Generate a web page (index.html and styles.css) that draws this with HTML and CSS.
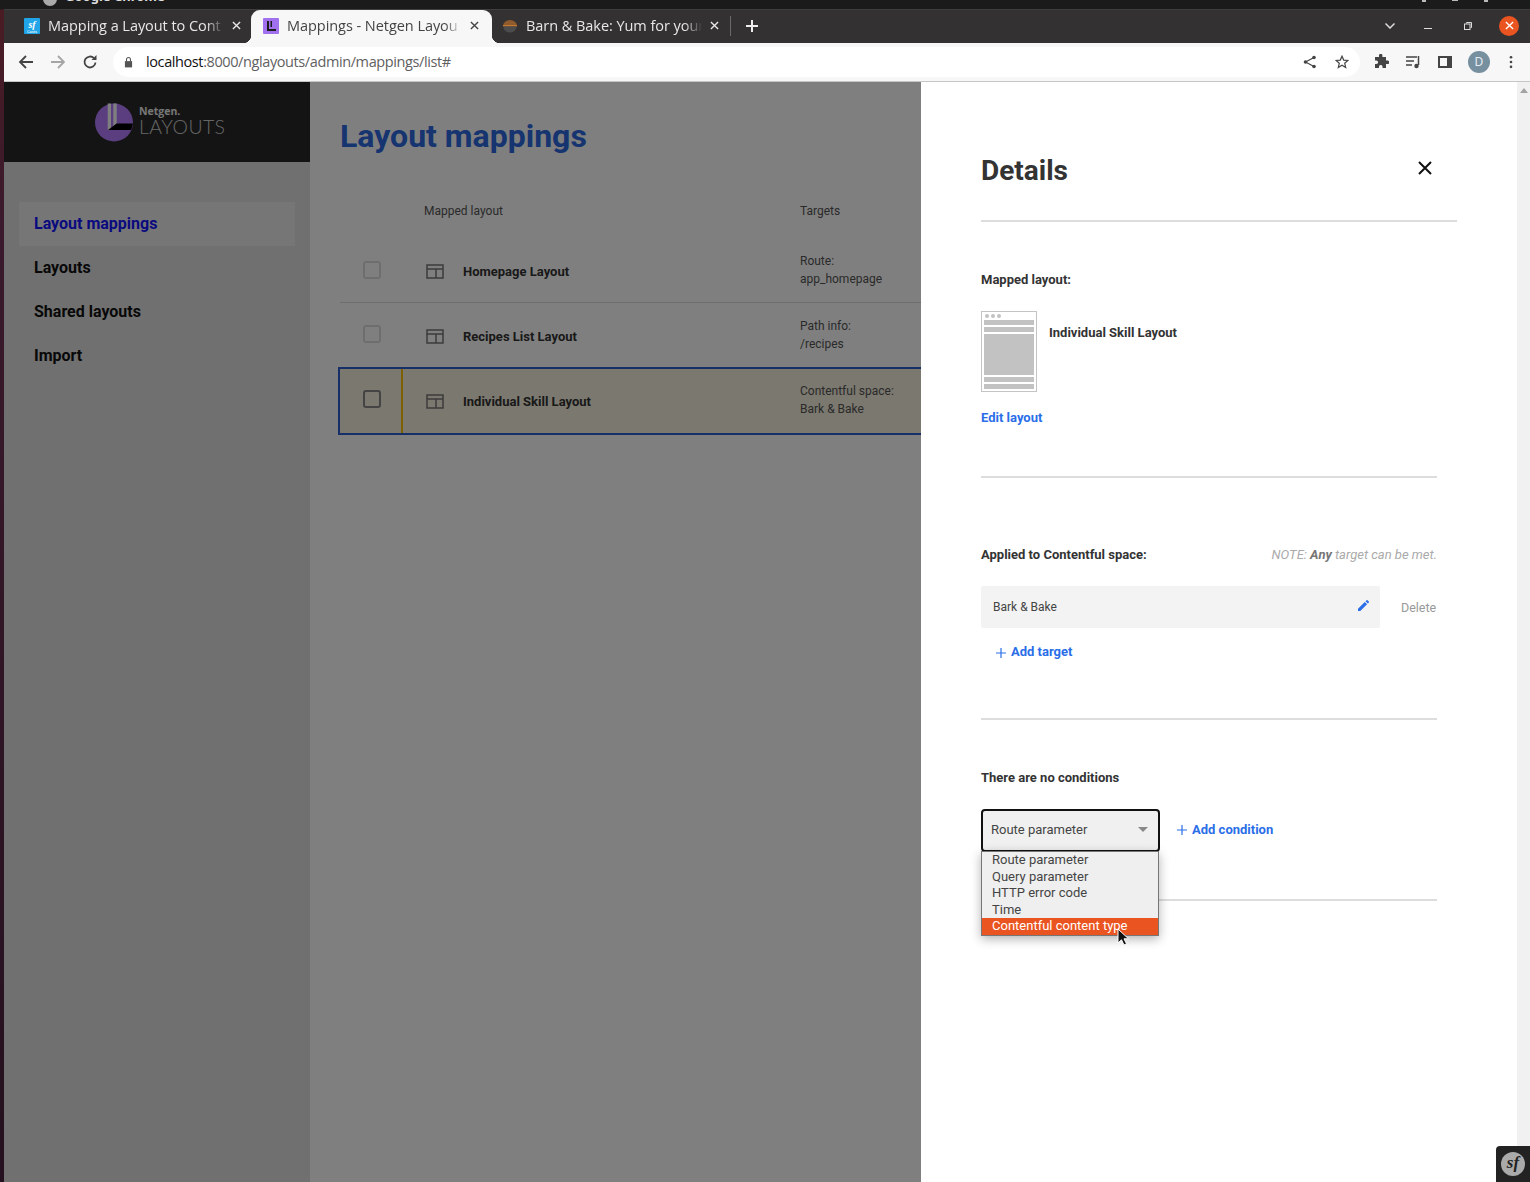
FILE: index.html
```html
<!DOCTYPE html>
<html lang="en">
<head>
<meta charset="utf-8">
<title>Mappings - Netgen Layouts</title>
<link rel="stylesheet" href="styles.css">
</head>
<body>
<div class="desktop-edge"></div>
<div class="window">
  <div class="titlebar"><span class="title-dot"></span><span class="title-text">Google Chrome</span><span class="strip-spacer"></span><i class="tray-bit"></i><i class="tray-bit tray-wide"></i><i class="tray-bit"></i></div>
  <div class="tabstrip">
    <div class="tab">
      <svg class="favicon" viewBox="0 0 16 16"><rect width="16" height="16" rx="1" fill="#1fa5e8"/><text class="fav-sf" x="8" y="9.500" text-anchor="middle">sf</text><text class="fav-casts" x="8" y="14.500" text-anchor="middle">Casts</text></svg>
      <span class="tab-title">Mapping a Layout to Cont</span>
      <svg class="tab-close" viewBox="0 0 10 10"><path d="M1 1l8 8M9 1L1 9"/></svg>
    </div>
    <div class="tab tab-active">
      <svg class="favicon" viewBox="0 0 16 16"><rect width="16" height="16" rx="1" fill="#a070ee"/><path d="M4 3h2v8h7v2H4z" fill="#1c1c1c"/><path d="M7.500 3h1.500v6H7.500z" fill="#1c1c1c"/></svg>
      <span class="tab-title">Mappings - Netgen Layou</span>
      <svg class="tab-close" viewBox="0 0 10 10"><path d="M1 1l8 8M9 1L1 9"/></svg>
    </div>
    <div class="tab">
      <svg class="favicon" viewBox="0 0 16 16"><path d="M1 8a7 6 0 0 1 14 0z" fill="#8f5a2c"/><path d="M1 7h14v1.500H1z" fill="#c2782f"/><path d="M1.500 8.500h13C14.500 12 12 14.500 8 14.500S1.500 12 1.500 8.500z" fill="#4c4c4c"/></svg>
      <span class="tab-title">Barn &amp; Bake: Yum for your</span>
      <svg class="tab-close" viewBox="0 0 10 10"><path d="M1 1l8 8M9 1L1 9"/></svg>
    </div>
    <span class="tab-sep"></span>
    <svg class="new-tab" viewBox="0 0 12 12"><path d="M6 0v12M0 6h12"/></svg>
    <span class="strip-spacer"></span>
    <svg class="win-chevron" viewBox="0 0 10 6"><path d="M.5.5L5 5 9.500.5"/></svg>
    <span class="win-min"></span>
    <svg class="win-restore" viewBox="0 0 8 8"><path d="M2.500 1.500V.5h5v5h-1"/><rect x=".5" y="2" width="5.500" height="5.500"/></svg>
    <span class="win-close"><svg viewBox="0 0 10 10"><path d="M1 1l8 8M9 1L1 9"/></svg></span>
  </div>
  <div class="toolbar">
    <svg class="tool-ico" viewBox="0 0 16 16"><path class="ink" d="M15 8H2M8 2L2 8l6 6"/></svg>
    <svg class="tool-ico tool-off" viewBox="0 0 16 16"><path class="ink" d="M1 8h13M8 2l6 6-6 6"/></svg>
    <svg class="tool-ico" viewBox="0 0 16 16"><path class="ink" d="M13.500 8.500A5.500 5.500 0 1 1 12 4.200"/><path class="solid" d="M14.500 1v5h-5z"/></svg>
    <div class="omnibox">
      <svg class="lock" viewBox="0 0 10 12"><path d="M1 5h8v7H1z" fill="#555"/><path d="M2.800 5V3.200a2.200 2.200 0 0 1 4.400 0V5" fill="none" stroke="#555" stroke-width="1.200"/></svg>
      <span class="url"><b class="url-host">localhost</b>:8000/nglayouts/admin/mappings/list#</span>
      <span class="strip-spacer"></span>
      <svg class="omni-ico" viewBox="0 0 14 14"><circle class="solid" cx="11" cy="2.500" r="1.800"/><circle class="solid" cx="2.500" cy="7" r="1.800"/><circle class="solid" cx="11" cy="11.500" r="1.800"/><path class="thin" d="M11 2.500L2.500 7l8.500 4.500"/></svg>
      <svg class="omni-ico" viewBox="0 0 14 14"><path class="thin" d="M7 1.200l1.700 3.900 4.200.4-3.200 2.800 1 4.100L7 10.200l-3.700 2.200 1-4.100L1.100 5.500l4.200-.4z"/></svg>
    </div>
    <svg class="ext-ico ext-puzzle" viewBox="0 0 16 16"><path class="solid" d="M6 1.500a1.700 1.700 0 0 1 3.400 0V3H13v3.500h1.500a1.800 1.800 0 0 1 0 3.600H13V14H9.500v-1.500a1.800 1.800 0 0 0-3.500 0V14H2v-4h1.300a1.800 1.800 0 0 0 0-3.600H2V3h4z"/></svg>
    <svg class="ext-ico" viewBox="0 0 16 16"><path class="thin2" d="M1 3h11M1 7h8M1 11h6"/><path class="thin2" d="M13.500 2v9"/><circle class="solid" cx="11.500" cy="12" r="2.200"/></svg>
    <svg class="ext-ico" viewBox="0 0 16 16"><path class="solid" fill-rule="evenodd" d="M1 2h14v12H1zM3 4v8h7V4z"/></svg>
    <span class="avatar">D</span>
    <svg class="menu-ico" viewBox="0 0 4 16"><circle class="solid" cx="2" cy="2.500" r="1.500"/><circle class="solid" cx="2" cy="8" r="1.500"/><circle class="solid" cx="2" cy="13.500" r="1.500"/></svg>
  </div>
  <div class="viewport">
    <div class="app">
      <aside class="sidebar">
        <div class="brand">
          <svg class="brand-mark" viewBox="0 0 39 39"><circle cx="19" cy="19.500" r="19" fill="#b47cff"/><path d="M12.700 .6H16V27h-3.300zM18.300 .4h3.400V21l-3.400 3z" fill="#fff"/><path d="M13 27l8.500-6.500H38l-1.800 6.500z" fill="#000"/></svg>
          <div class="brand-words">
            <span class="brand-small">Netgen.</span>
            <span class="brand-big">LAYOUTS</span>
          </div>
        </div>
        <nav class="nav">
          <a class="nav-item nav-active">Layout mappings</a>
          <a class="nav-item">Layouts</a>
          <a class="nav-item">Shared layouts</a>
          <a class="nav-item">Import</a>
        </nav>
      </aside>
      <main class="main">
        <h1 class="page-title">Layout mappings</h1>
        <div class="table-head">
          <span class="col-layout">Mapped layout</span>
          <span class="col-target">Targets</span>
        </div>
        <div class="row">
          <span class="check"></span>
          <span class="col-layout row-name"><svg class="layout-ico" viewBox="0 0 18 15"><path d="M1 1h16v13H1zM1 5h16M10 5v9"/></svg>Homepage Layout</span>
          <span class="col-target target">Route:<br>app_homepage</span>
        </div>
        <div class="row row-second">
          <span class="check"></span>
          <span class="col-layout row-name"><svg class="layout-ico" viewBox="0 0 18 15"><path d="M1 1h16v13H1zM1 5h16M10 5v9"/></svg>Recipes List Layout</span>
          <span class="col-target target">Path info:<br>/recipes</span>
        </div>
        <div class="row row-selected">
          <span class="check check-on"></span>
          <span class="col-layout row-name"><svg class="layout-ico" viewBox="0 0 18 15"><path d="M1 1h16v13H1zM1 5h16M10 5v9"/></svg>Individual Skill Layout</span>
          <span class="col-target target">Contentful space:<br>Bark &amp; Bake</span>
        </div>
      </main>
    </div>
    <div class="scrim"></div>
    <section class="drawer">
      <header class="drawer-head">
        <h2 class="drawer-title">Details</h2>
        <svg class="drawer-close" viewBox="0 0 14 14"><path d="M1 1l12 12M13 1L1 13"/></svg>
      </header>
      <div class="block block-layout">
        <h3 class="label">Mapped layout:</h3>
        <div class="mapped">
          <div class="thumb">
            <div class="thumb-dots"><i></i><i></i><i></i></div>
            <div class="thumb-bar"></div>
            <div class="thumb-bar"></div>
            <div class="thumb-main"></div>
            <div class="thumb-bar"></div>
            <div class="thumb-bar"></div>
          </div>
          <strong class="mapped-name">Individual Skill Layout</strong>
        </div>
        <a class="link edit-link">Edit layout</a>
      </div>
      <div class="block block-target">
        <div class="label-row">
          <h3 class="label">Applied to Contentful space:</h3>
          <span class="note">NOTE: <b>Any</b> target can be met.</span>
        </div>
        <div class="target-row">
          <div class="target-box">
            <span>Bark &amp; Bake</span>
            <svg class="pencil" viewBox="0 0 12 12"><path d="M0 12V9.500L7.400 2.100l2.500 2.500L2.500 12zM8.200 1.300L9.300.2a.7.7 0 0 1 1 0l1.500 1.500a.7.7 0 0 1 0 1L10.700 3.800z"/></svg>
          </div>
          <span class="delete">Delete</span>
        </div>
        <a class="link add-target"><svg class="plus" viewBox="0 0 10 10"><path d="M5 0v10M0 5h10"/></svg>Add target</a>
      </div>
      <div class="block block-cond">
        <h3 class="label">There are no conditions</h3>
        <div class="cond-row">
          <div class="select-wrap">
            <div class="select"><span>Route parameter</span><i class="caret"></i></div>
            <ul class="options">
              <li>Route parameter</li>
              <li>Query parameter</li>
              <li>HTTP error code</li>
              <li>Time</li>
              <li class="option-hot">Contentful content type</li>
            </ul>
            <svg class="pointer" viewBox="0 0 12 18"><path d="M1 1v14l3.500-3.200L7 17l2.500-1.200-2.500-5h4.500z" fill="#111" stroke="#fff" stroke-width="1"/></svg>
          </div>
          <a class="link add-cond"><svg class="plus" viewBox="0 0 10 10"><path d="M5 0v10M0 5h10"/></svg>Add condition</a>
        </div>
      </div>
    </section>
    <div class="scrollbar"><i class="scroll-up"></i></div>
    <div class="sf-toolbar"><span class="sf-badge">sf</span></div>
  </div>
</div>
</body>
</html>
```

FILE: styles.css
```css
* { box-sizing: border-box; }
html, body { margin: 0; height: 100%; overflow: hidden; }
body { display: flex; font-family: Roboto, "Liberation Sans", sans-serif; background: #fff; color: #333; }
h1, h2, h3, ul { margin: 0; padding: 0; }
.desktop-edge { width: 4px; background: linear-gradient(#1b1b1b 9px, #4a1c24 10px, #3a1a2c 220px, #24101e 100%); }
.window { flex: 1; display: flex; flex-direction: column; min-width: 0; }

.titlebar { height: 9px; margin-left: -4px; background: #1b1b1b; overflow: hidden; display: flex; align-items: flex-end; padding: 0 42px 0 43px; gap: 8px; color: #ddd; font: 700 13px/18px "Noto Sans", sans-serif; }
.title-dot { width: 14px; height: 14px; border-radius: 50%; background: #aaa; flex: none; margin-bottom: 3px; }
.title-text { display: block; height: 18px; margin-bottom: 4px; }
.tray-bit { width: 4px; height: 2px; background: #bbb; align-self: flex-start; margin-left: 18px; flex: none; }
.tray-wide { width: 6px; height: 1px; }

.tabstrip { height: 34px; background: #333132; display: flex; align-items: center; color: #e8e8e8; border-top: 1px solid #3e3e3e; }
.tab { width: 247px; height: 100%; display: flex; align-items: center; padding: 0 9px 2px 20px; gap: 8px; position: relative; flex: none; }
.tab-active { width: 241px; background: #f7f7f7; color: #444; border-radius: 9px 9px 0 0; padding: 0 12px 2px 12px; }
.tab-active::before, .tab-active::after { content: ""; position: absolute; bottom: 0; width: 8px; height: 8px; }
.tab-active::before { left: -8px; background: radial-gradient(circle at 0 0, transparent 8px, #f7f7f7 8.500px); }
.tab-active::after { right: -8px; background: radial-gradient(circle at 100% 0, transparent 8px, #f7f7f7 8.500px); }
.tab:last-of-type { width: 238px; padding: 0 10px 2px 10px; }
.favicon { width: 16px; height: 16px; flex: none; }
.fav-sf { font: italic 700 10px "Liberation Serif", serif; fill: #fff; }
.fav-casts { font: 4px Roboto, sans-serif; fill: #fff; }
.tab-title { flex: 1; font: 14.500px/20px "Open Sans", sans-serif; letter-spacing: -.05px; white-space: nowrap; overflow: hidden; -webkit-mask-image: linear-gradient(90deg, #000 90%, transparent 100%); mask-image: linear-gradient(90deg, #000 90%, transparent 100%); }
.tab-close { width: 9px; height: 9px; flex: none; stroke: currentColor; stroke-width: 1.500; margin-right: 1px; }
.tab-sep { width: 1px; height: 20px; background: #6a6a6a; flex: none; margin-bottom: 2px; }
.new-tab { width: 12px; height: 12px; margin: 0 0 2px 15px; stroke: #eee; stroke-width: 2; flex: none; }
.strip-spacer { flex: 1; }
.win-chevron { width: 10px; height: 6px; stroke: #ddd; stroke-width: 1.500; fill: none; flex: none; margin: 0 29px 2px 0; }
.win-min { width: 8px; height: 1px; background: #ddd; margin: 4px 32px 0 0; flex: none; }
.win-restore { width: 8px; height: 8px; fill: none; stroke: #ddd; stroke-width: 1; flex: none; margin: 0 27px 2px 0; }
.win-close { width: 20px; height: 20px; border-radius: 50%; background: #ea5420; display: flex; align-items: center; justify-content: center; flex: none; margin: 0 11px 2px 0; }
.win-close svg { width: 9px; height: 9px; stroke: #fff; stroke-width: 1.500; }

.toolbar { height: 39px; background: #f7f7f7; border-bottom: 1px solid #c6c6c6; display: flex; align-items: center; padding-left: 14px; flex: none; }
.tool-ico { width: 16px; height: 16px; margin-right: 16px; flex: none; }
.tool-off { opacity: .45; }
.ink { fill: none; stroke: #444; stroke-width: 1.800; }
.solid { fill: #444; stroke: none; }
.thin { fill: none; stroke: #444; stroke-width: 1.200; }
.thin2 { fill: none; stroke: #444; stroke-width: 1.500; }
.omnibox { width: 1247px; height: 30px; margin-left: -1px; background: #fff; border-radius: 15px; display: flex; align-items: center; padding: 0 11px 0 11px; flex: none; }
.lock { width: 9px; height: 12px; flex: none; margin-right: 13px; }
.url { font: 14.500px/20px "Open Sans", sans-serif; letter-spacing: -.4px; color: #5f5f5f; white-space: nowrap; }
.url-host { font-weight: 400; color: #111; }
.omni-ico { width: 14px; height: 14px; margin-left: 18px; flex: none; }
.ext-ico { width: 16px; height: 16px; margin-right: 16px; flex: none; }
.ext-puzzle { margin-left: 13px; }
.avatar { width: 22px; height: 22px; border-radius: 50%; background: #77909f; color: #e8eef2; font: 12px/22px "Noto Sans", sans-serif; text-align: center; flex: none; margin-right: 20px; margin-left: -1px; }
.menu-ico { width: 4px; height: 14px; flex: none; margin-left: -1px; }

.viewport { flex: 1; position: relative; display: flex; overflow: hidden; min-height: 0; }
.app { flex: 1; display: flex; min-width: 0; }
.sidebar { width: 306px; background: #e0e0e0; flex: none; }
.brand { height: 80px; background: #282828; display: flex; align-items: center; padding: 1px 0 0 91px; gap: 5px; }
.brand-mark { width: 39px; height: 39px; flex: none; }
.brand-words { display: flex; flex-direction: column; margin-top: -4px; }
.brand-small { font: 700 10.500px/12px "Open Sans", sans-serif; color: #eee; }
.brand-big { font: 300 19.500px/20px Lato, sans-serif; color: #ccc; letter-spacing: .4px; }
.nav { padding: 40px 15px 0; display: flex; flex-direction: column; }
.nav-item { height: 44px; padding-left: 15px; font-size: 16px; font-weight: 700; line-height: 44px; color: #111; }
.nav-active { background: #ececec; color: #1414ff; }
.main { flex: 1; background: #fff; padding: 32px 0 0 30px; min-width: 0; overflow: hidden; }
.page-title { font-size: 32px; line-height: 44px; font-weight: 700; color: #2c68e0; height: 44px; }
.table-head { display: flex; align-items: flex-start; height: 82px; padding: 45px 0 0 84px; font-size: 12px; line-height: 16px; color: #555; }
.col-layout { width: 376px; flex: none; display: flex; align-items: center; }
.col-target { flex: none; }
.row .col-layout { width: 375px; }
.row { height: 63px; display: flex; align-items: center; border-bottom: 1px solid #ddd; width: 660px; padding-left: 23px; }
.row-second { height: 64px; padding-top: 2px; border-bottom: 0; }
.row-selected { height: 68px; background: #f6f0de; border: 2px solid #2c5fd0; border-right: 0; padding-left: 23px; position: relative; margin-left: -2px; width: 662px; }
.row-selected::after { content: ""; position: absolute; left: 61px; top: 0; bottom: 0; width: 2px; background: #ffc000; }
.check { width: 18px; height: 18px; border: 2px solid #ddd; border-radius: 3px; flex: none; margin: 0 44px 2px 0; }
.row-second .check { margin-bottom: 4px; }
.check-on { border-color: #888; margin-bottom: 4px; }
.row-name { font-size: 13px; font-weight: 700; color: #333; }
.layout-ico { width: 18px; height: 15px; fill: none; stroke: #777; stroke-width: 1.500; margin: 0 19px 0 1px; flex: none; }
.target { font-size: 12px; line-height: 18px; color: #555; margin-top: -2px; }

.scrim { position: absolute; inset: 0; background: rgba(0, 0, 0, .5); }
.drawer { position: absolute; left: 917px; right: 13px; top: 0; bottom: 0; background: #fff; padding-left: 60px; color: #333; }
.drawer-head { width: 476px; height: 140px; border-bottom: 2px solid #ddd; display: flex; justify-content: space-between; align-items: flex-start; padding-top: 72px; }
.drawer-title { font-size: 28px; line-height: 34px; font-weight: 700; color: #333; }
.drawer-close { width: 14px; height: 14px; stroke: #111; stroke-width: 2; margin: 7px 25px 0 0; }
.block { width: 456px; border-bottom: 2px solid #ddd; }
.block-layout { height: 256px; padding-top: 50px; }
.block-target { height: 242px; padding-top: 69px; }
.block-cond { height: 181px; padding-top: 50px; }
.label { font-size: 13px; line-height: 16px; font-weight: 700; color: #333; }
.mapped { display: flex; margin-top: 23px; }
.thumb { width: 56px; height: 81px; border: 1px solid #c4c4c4; padding: 2px; display: flex; flex-direction: column; gap: 2px; flex: none; }
.thumb-dots { display: flex; gap: 2px; padding-left: 1px; height: 4px; }
.thumb-dots i { width: 4px; height: 4px; border-radius: 50%; background: #c2c2c2; }
.thumb-bar { height: 5px; background: #c2c2c2; }
.thumb-main { height: 42px; background: #c2c2c2; }
.mapped-name { font-size: 13px; line-height: 16px; margin: 14px 0 0 12px; color: #333; }
.link { color: #2a6ee8; font-weight: 700; font-size: 13px; line-height: 16px; display: flex; align-items: center; }
.edit-link { margin-top: 18px; }
.label-row { display: flex; justify-content: space-between; }
.note { font-size: 13px; line-height: 16px; font-style: italic; color: #aaa; }
.note b { color: #777; }
.target-row { display: flex; align-items: center; margin-top: 23px; }
.target-box { width: 399px; height: 42px; background: #f3f3f3; border-radius: 2px; display: flex; align-items: center; justify-content: space-between; padding: 0 11px 0 12px; font-size: 12px; color: #444; }
.pencil { width: 11px; height: 11px; fill: #2a6ee8; margin-bottom: 4px; }
.delete { font-size: 12.500px; color: #999; margin-left: 21px; }
.plus { width: 10px; height: 10px; stroke: #2a6ee8; stroke-width: 1.200; margin-right: 5px; flex: none; margin-top: 1px; }
.add-target { margin: 16px 0 0 15px; }
.cond-row { display: flex; align-items: center; margin-top: 23px; }
.select-wrap { position: relative; width: 179px; height: 43px; flex: none; }
.select { height: 43px; border: 2px solid #111; border-radius: 4px; background: #f0f0f0; display: flex; align-items: center; justify-content: space-between; padding: 0 10px 2px 8px; font-size: 13px; color: #444; }
.caret { width: 0; height: 0; border: 5px solid transparent; border-top-color: #888; border-bottom: 0; }
.options { position: absolute; left: 0; top: 42px; width: 178px; list-style: none; background: #efefef; border: 1px solid #767676; box-shadow: 0 3px 10px rgba(0, 0, 0, .3); font-size: 13px; line-height: 16.500px; color: #444; }
.options li { padding-left: 10px; height: 16.500px; white-space: nowrap; }
.options .option-hot { background: #ea5420; color: #fff; }
.pointer { position: absolute; left: 136px; top: 119px; width: 12px; height: 18px; }
.add-cond { margin: -2px 0 0 17px; }

.scrollbar { width: 13px; background: #f1f1f1; flex: none; position: relative; z-index: 1; display: flex; justify-content: center; padding-top: 6px; }
.scroll-up { width: 0; height: 0; border: 4px solid transparent; border-bottom: 5px solid #a3a3a3; border-top: 0; }
.sf-toolbar { position: absolute; right: 0; bottom: 0; width: 34px; height: 36px; background: #222; border-top-left-radius: 4px; z-index: 2; display: flex; align-items: center; justify-content: center; }
.sf-badge { width: 24px; height: 24px; border-radius: 50%; background: #aaa; color: #222; font: italic 700 17px/22px "Liberation Serif", serif; text-align: center; }
```
